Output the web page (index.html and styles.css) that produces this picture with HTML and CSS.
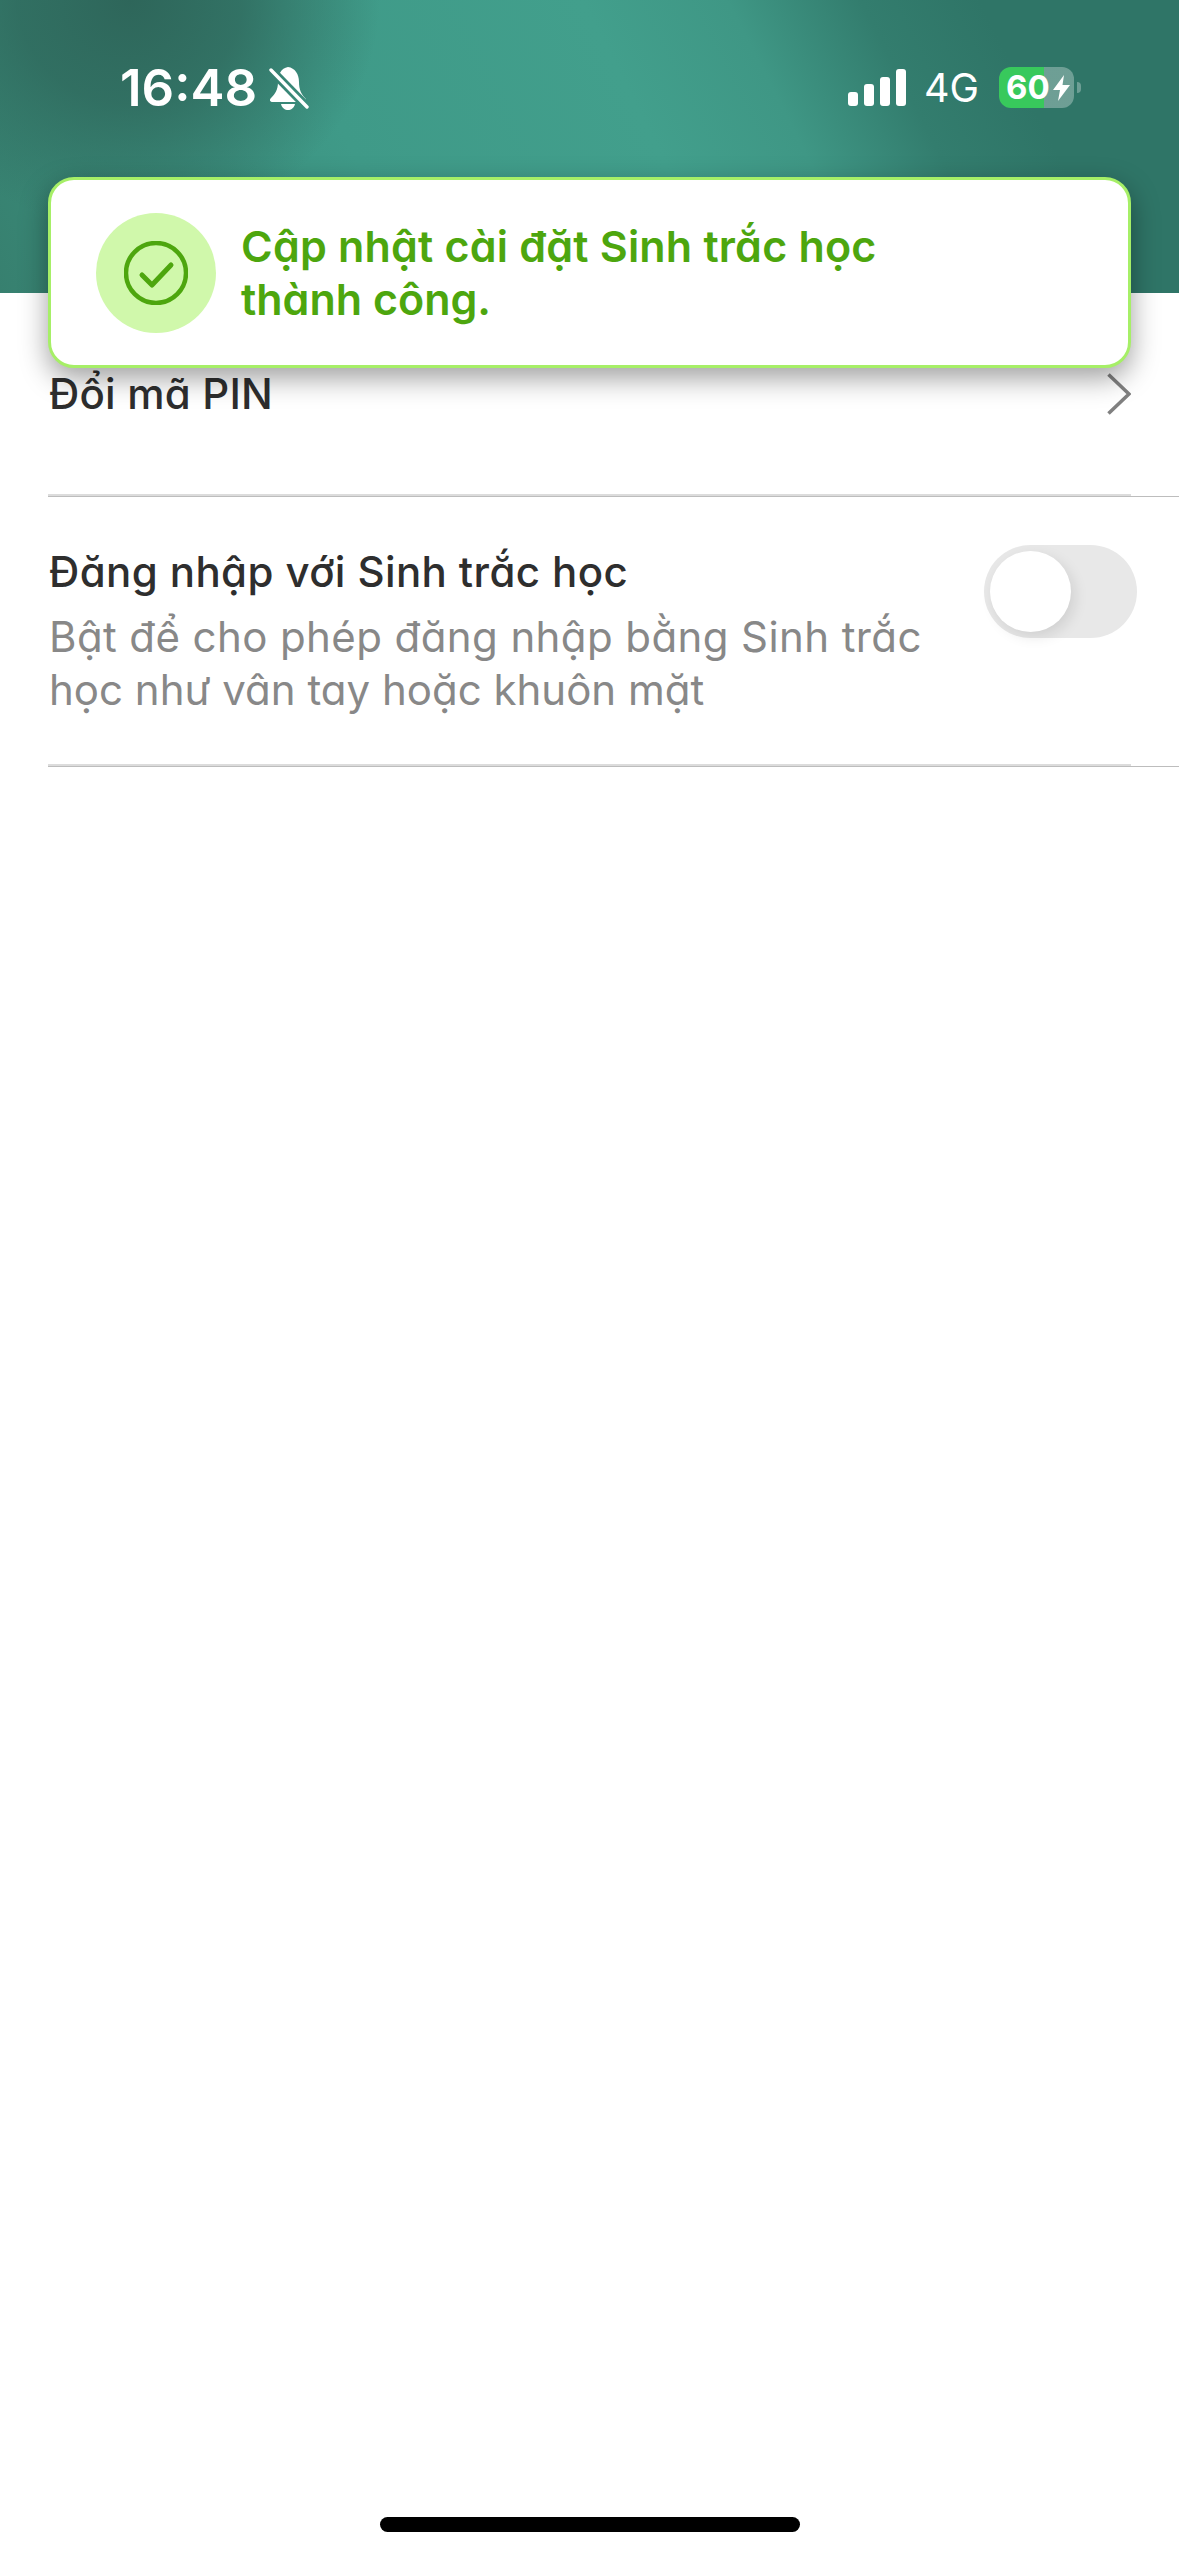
FILE: index.html
```html
<!DOCTYPE html>
<html lang="vi">
<head>
<meta charset="utf-8">
<title>Cài đặt</title>
<link rel="stylesheet" href="styles.css">
</head>
<body>
<div class="page">
  <header class="header">
    <div class="status">
      <div class="status-left">
        <span class="time">16:48</span>
        <svg class="bell" width="40" height="43" viewBox="0 0 40 43" aria-hidden="true">
          <defs>
            <mask id="gap" maskUnits="userSpaceOnUse" x="0" y="0" width="40" height="43">
              <rect width="40" height="43" fill="#fff"/>
              <line x1="0" y1="1" x2="40" y2="42" stroke="#000" stroke-width="9"/>
            </mask>
          </defs>
          <g mask="url(#gap)" fill="#fff">
            <path d="M19 0C12 1 9 8 9 15C9 23 6 27 2 31C0 33 1 35 4 35L33 35C37 35 38 33 36 31C32 27 30 22 30 15C30 7 26 1 19 0Z"/>
            <path d="M12 37H26C25 41 22 43 19 43C16 43 13 41 12 37Z"/>
          </g>
          <line x1="2" y1="3" x2="38" y2="40" stroke="#fff" stroke-width="3.4" stroke-linecap="round"/>
        </svg>
      </div>
      <div class="status-right">
        <svg class="signal" width="58" height="37" viewBox="0 0 58 37" aria-hidden="true">
          <rect x="0" y="23" width="10" height="14" rx="3" fill="#fff"/>
          <rect x="16" y="15" width="10" height="22" rx="3" fill="#fff"/>
          <rect x="32" y="8" width="10" height="29" rx="3" fill="#fff"/>
          <rect x="48" y="0" width="10" height="37" rx="3" fill="#fff"/>
        </svg>
        <span class="net">4G</span>
        <div class="battery">
          <span class="level">60</span>
          <svg class="bolt" width="17" height="26" viewBox="0 0 17 26" aria-hidden="true">
            <path d="M11 0L0 15H7L5 26L17 10H9.500Z" fill="#fff"/>
          </svg>
        </div>
      </div>
    </div>
  </header>

  <main class="list">
    <div class="row row-pin">
      <span class="row-title">Đổi mã PIN</span>
      <svg class="chevron" width="24" height="42" viewBox="0 0 24 42" aria-hidden="true">
        <polyline points="1.500,1.500 22,21 1.500,40.500" fill="none" stroke="#808080" stroke-width="3.600"/>
      </svg>
    </div>
    <div class="divider"></div>
    <div class="row row-bio">
      <div class="bio-text">
        <div class="row-title strong">Đăng nhập với Sinh trắc học</div>
        <div class="row-desc">
          <span class="line-wide">Bật để cho phép đăng nhập bằng Sinh trắc</span>
          <span class="line-tight">học như vân tay hoặc khuôn mặt</span>
        </div>
      </div>
      <div class="toggle"><span class="knob"></span></div>
    </div>
    <div class="divider"></div>
  </main>

  <div class="home-wrap"><div class="home-bar"></div></div>

  <div class="toast">
    <div class="toast-icon">
      <svg width="64" height="64" viewBox="0 0 64 64" aria-hidden="true">
        <circle cx="32" cy="32" r="30" fill="none" stroke="#4da60e" stroke-width="4.500"/>
        <polyline points="18,34 28,44 47,24" fill="none" stroke="#4da60e" stroke-width="5" stroke-linecap="round" stroke-linejoin="round"/>
      </svg>
    </div>
    <p class="toast-text">
      <span class="toast-first">Cập nhật cài đặt Sinh trắc học</span>
      <span class="toast-second">thành công.</span>
    </p>
  </div>
</div>
</body>
</html>
```
FILE: styles.css
```css
* { box-sizing: border-box; }
html, body { margin: 0; padding: 0; background: #fff; }
body { font-family: Inter, "Noto Sans", sans-serif; font-feature-settings: "cv11" 1; }

.page {
  position: relative;
  width: 1179px;
  height: 2556px;
  display: flex;
  flex-direction: column;
  overflow: hidden;
  background: #fff;
}

.header {
  height: 293px;
  flex: none;
  padding-top: 67px;
  background:
    radial-gradient(ellipse 250px 230px at 130px 0, #2e665a 0%, rgba(46,102,90,.75) 45%, rgba(46,102,90,0) 100%),
    linear-gradient(63deg, #37806f 0, #3b8f7d 18%, #3f9a88 32%, #429f8c 55%, #3f9785 66%, #337d6e 76%, #2f7567 85%, #2f7567 100%);
}

.status {
  display: flex;
  justify-content: space-between;
  padding: 0 105px 0 120px;
}
.status-left { display: flex; align-items: flex-start; gap: 12px; }
.time {
  font-size: 51px;
  line-height: 42px;
  font-weight: 600;
  color: #fff;
}
.status-right { display: flex; align-items: flex-start; }
.signal { margin-top: 2px; }
.net {
  margin: 0 20px 0 18px;
  font-size: 39.500px;
  line-height: 42px;
  font-weight: 400;
  color: #fff;
}
.battery {
  position: relative;
  width: 75px;
  height: 41px;
  padding: 0 0 0 7px;
  border-radius: 12px;
  display: flex;
  align-items: center;
  background: linear-gradient(90deg, #38c95c 60%, rgba(255,255,255,.3) 60%);
}
.battery::after {
  content: "";
  position: absolute;
  right: -7px;
  top: 15px;
  width: 4px;
  height: 11px;
  border-radius: 0 4px 4px 0;
  background: rgba(255,255,255,.3);
}
.level {
  font-size: 33px;
  line-height: 41px;
  font-weight: 700;
  color: #fff;
}
.bolt { margin-left: 3px; }

.list { flex: 1; }
.row { display: flex; padding-left: 49px; }
.row-pin {
  height: 201px;
  align-items: center;
  justify-content: space-between;
  padding-right: 48px;
}
.row-title {
  font-size: 42px;
  line-height: 53px;
  font-weight: 500;
  letter-spacing: .2px;
  color: #2e2e2e;
}
.row-title.strong { letter-spacing: .4px; }
.row-bio {
  height: 267px;
  justify-content: space-between;
  padding: 48px 42px 0 49px;
}
.bio-text { width: 900px; }
.row-desc {
  font-size: 42px;
  line-height: 53px;
  font-weight: 400;
  color: #888;
  margin-top: 12px;
}
.line-wide, .line-tight { display: block; white-space: nowrap; }
.line-wide { letter-spacing: .4px; }
.line-tight { letter-spacing: 0; }
.toggle {
  width: 153px;
  height: 93px;
  flex: none;
  padding: 6px;
  border-radius: 47px;
  background: #e8e8e8;
}
.knob {
  display: block;
  width: 81px;
  height: 81px;
  border-radius: 50%;
  background: #fff;
  box-shadow: 4px 5px 14px rgba(0,0,0,.1);
}
.divider {
  height: 3px;
  margin-left: 48px;
  background:
    linear-gradient(#bdbdbd, #bdbdbd) 0 2px / 100% 1px no-repeat,
    linear-gradient(#dcdcdc, #dcdcdc) 0 0 / 1083px 3px no-repeat;
}

.home-wrap { flex: none; height: 39px; }
.home-bar {
  width: 420px;
  height: 15px;
  margin: 0 auto;
  border-radius: 8px;
  background: #000;
}

.toast {
  position: absolute;
  left: 48px;
  top: 177px;
  width: 1083px;
  height: 191px;
  padding-left: 45px;
  display: flex;
  align-items: center;
  gap: 25px;
  background: #fff;
  border: 3px solid #a6ef67;
  border-radius: 26px;
  box-shadow: 0 10px 28px rgba(0,0,0,.38);
}
.toast-icon {
  width: 120px;
  height: 120px;
  flex: none;
  border-radius: 50%;
  background: #d0f8ab;
  display: flex;
  align-items: center;
  justify-content: center;
}
.toast-text {
  margin: 0;
  font-size: 43px;
  line-height: 53px;
  font-weight: 600;
  color: #4da60e;
}
.toast-first, .toast-second { display: block; white-space: nowrap; }
.toast-first { letter-spacing: .2px; }
.toast-second { letter-spacing: 0; }
```
